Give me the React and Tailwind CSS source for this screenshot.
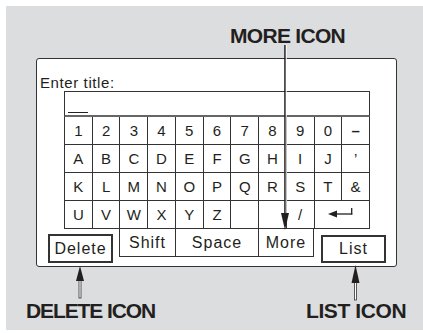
import React from "react";

const rows = [
  ["1", "2", "3", "4", "5", "6", "7", "8", "9", "0", "–"],
  ["A", "B", "C", "D", "E", "F", "G", "H", "I", "J", "’"],
  ["K", "L", "M", "N", "O", "P", "Q", "R", "S", "T", "&"],
  ["U", "V", "W", "X", "Y", "Z", "", "", "/"],
];

function EnterGlyph() {
  return (
    <svg width="25" height="10" viewBox="0 0 25 10" className="mb-[3px] mr-[3px]">
      <polygon points="0,6 9,2.5 9,9.5" fill="#231f20" />
      <line x1="8" y1="6" x2="24.3" y2="6" stroke="#231f20" strokeWidth="1.3" />
      <line x1="23.7" y1="0" x2="23.7" y2="6.6" stroke="#231f20" strokeWidth="1.3" />
    </svg>
  );
}

function Key({ label }) {
  return (
    <div className="bg-white flex items-center justify-center">
      <span className={label === "–" ? "font-bold" : ""}>{label}</span>
    </div>
  );
}

export default function App() {
  return (
    <div className="w-[423px] h-[333px] bg-white pt-[6px] pl-[6px]">
      <div className="relative h-[324px] bg-[#dcdddf] font-['Liberation_Sans',Arial,sans-serif] text-[#231f20]">
        <div className="pt-[19px] pl-[224px] text-[21px] leading-[21px] font-bold tracking-[-0.7px]">
          MORE ICON
        </div>

        <div className="mt-[12px] ml-[30px] w-[361px] h-[209px] bg-white border border-[#333] rounded-[3px]">
          <div className="pt-[16px] pl-[3px] text-[15px] leading-[15px] tracking-[0.6px]">Enter title:</div>

          <div className="mt-[1px] ml-[27px] w-[306px] h-[26px] border border-[#333] border-b-2 border-b-[#666] flex items-end pl-[3px] pb-[2px]">
            <div className="w-[20px] h-px bg-[#222]" />
          </div>

          <div className="ml-[27px] w-[306px] grid grid-cols-11 auto-rows-[27px] gap-px bg-[#333] px-px pb-px text-[15px] leading-none">
            {rows.map((r, i) => r.map((k, j) => <Key key={i + "-" + j} label={k} />))}
            <div className="col-span-2 bg-white flex items-center justify-center">
              <EnterGlyph />
            </div>
          </div>

          <div className="flex items-start text-[16px] leading-none tracking-[1px]">
            <div className="ml-[11px] mt-[5px] w-[65px] h-[29px] border-2 border-[#333] flex items-center justify-center">
              Delete
            </div>
            <div className="ml-[6px] flex h-[28px]">
              <div className="w-[57px] border-x border-b border-[#333] flex items-center justify-center">Shift</div>
              <div className="w-[83px] border-r border-b border-[#333] flex items-center justify-center">Space</div>
              <div className="w-[55px] border-r border-b border-[#333] flex items-center justify-center">More</div>
            </div>
            <div className="ml-[7px] mt-[6px] w-[65px] h-[28px] border-2 border-[#333] flex items-center justify-center">
              List
            </div>
          </div>
        </div>

        <div className="mt-[33px] flex text-[21px] leading-[21px] font-bold">
          <div className="w-[300px] pl-[20px] tracking-[-1.1px]">DELETE ICON</div>
          <div className="tracking-[-0.4px]">LIST ICON</div>
        </div>

        <svg className="absolute inset-0 pointer-events-none" width="417" height="324" viewBox="0 0 417 324">
          <rect x="278.2" y="39" width="1.6" height="170" fill="#231f20" />
          <rect x="279.8" y="39" width="0.9" height="168" fill="#ffffff" />
          <polygon points="275,207 283,207 279,224" fill="#231f20" />

          <rect x="73" y="274" width="2" height="18" fill="#fff" stroke="#333" strokeWidth="0.8" />
          <polygon points="70,275 78,275 74,260" fill="#231f20" />

          <rect x="348.5" y="276" width="2" height="18" fill="#fff" stroke="#333" strokeWidth="0.8" />
          <polygon points="345.5,277 353.5,277 349.5,259" fill="#231f20" />
        </svg>
      </div>
    </div>
  );
}
